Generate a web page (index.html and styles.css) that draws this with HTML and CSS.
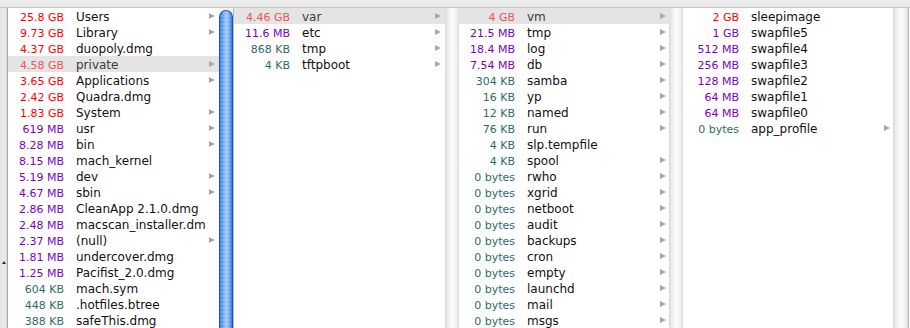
FILE: index.html
```html
<!DOCTYPE html>
<html>
<head>
<meta charset="utf-8">
<link rel="stylesheet" href="styles.css">
</head>
<body>
<div class="topband"></div>
<div class="browser">
  <div class="leftstrip"><span class="caret"></span></div>

  <div class="column">
    <div class="list w211">
      <div class="row"><span class="size gb">25.8 GB</span><span class="name">Users</span><span class="arrow"></span></div>
      <div class="row"><span class="size gb">9.73 GB</span><span class="name">Library</span><span class="arrow"></span></div>
      <div class="row"><span class="size gb">4.37 GB</span><span class="name">duopoly.dmg</span><span></span></div>
      <div class="row sel"><span class="size gb">4.58 GB</span><span class="name">private</span><span class="arrow"></span></div>
      <div class="row"><span class="size gb">3.65 GB</span><span class="name">Applications</span><span class="arrow"></span></div>
      <div class="row"><span class="size gb">2.42 GB</span><span class="name">Quadra.dmg</span><span></span></div>
      <div class="row"><span class="size gb">1.83 GB</span><span class="name">System</span><span class="arrow"></span></div>
      <div class="row"><span class="size mb">619 MB</span><span class="name">usr</span><span class="arrow"></span></div>
      <div class="row"><span class="size mb">8.28 MB</span><span class="name">bin</span><span class="arrow"></span></div>
      <div class="row"><span class="size mb">8.15 MB</span><span class="name">mach_kernel</span><span></span></div>
      <div class="row"><span class="size mb">5.19 MB</span><span class="name">dev</span><span class="arrow"></span></div>
      <div class="row"><span class="size mb">4.67 MB</span><span class="name">sbin</span><span class="arrow"></span></div>
      <div class="row"><span class="size mb">2.86 MB</span><span class="name">CleanApp 2.1.0.dmg</span><span></span></div>
      <div class="row"><span class="size mb">2.48 MB</span><span class="name">macscan_installer.dm</span><span></span></div>
      <div class="row"><span class="size mb">2.37 MB</span><span class="name">(null)</span><span class="arrow"></span></div>
      <div class="row"><span class="size mb">1.81 MB</span><span class="name">undercover.dmg</span><span></span></div>
      <div class="row"><span class="size mb">1.25 MB</span><span class="name">Pacifist_2.0.dmg</span><span></span></div>
      <div class="row"><span class="size kb">604 KB</span><span class="name">mach.sym</span><span></span></div>
      <div class="row"><span class="size kb">448 KB</span><span class="name">.hotfiles.btree</span><span></span></div>
      <div class="row"><span class="size kb">388 KB</span><span class="name">safeThis.dmg</span><span></span></div>
    </div>
    <div class="scroller s15 active"><div class="thumb"></div></div>
  </div>

  <div class="column">
    <div class="list w211">
      <div class="row sel"><span class="size gb">4.46 GB</span><span class="name">var</span><span class="arrow"></span></div>
      <div class="row"><span class="size mb">11.6 MB</span><span class="name">etc</span><span class="arrow"></span></div>
      <div class="row"><span class="size kb">868 KB</span><span class="name">tmp</span><span class="arrow"></span></div>
      <div class="row"><span class="size kb">4 KB</span><span class="name">tftpboot</span><span class="arrow"></span></div>
    </div>
    <div class="scroller s14"></div>
  </div>

  <div class="column">
    <div class="list w210">
      <div class="row sel"><span class="size gb">4 GB</span><span class="name">vm</span><span class="arrow"></span></div>
      <div class="row"><span class="size mb">21.5 MB</span><span class="name">tmp</span><span class="arrow"></span></div>
      <div class="row"><span class="size mb">18.4 MB</span><span class="name">log</span><span class="arrow"></span></div>
      <div class="row"><span class="size mb">7.54 MB</span><span class="name">db</span><span class="arrow"></span></div>
      <div class="row"><span class="size kb">304 KB</span><span class="name">samba</span><span class="arrow"></span></div>
      <div class="row"><span class="size kb">16 KB</span><span class="name">yp</span><span class="arrow"></span></div>
      <div class="row"><span class="size kb">12 KB</span><span class="name">named</span><span class="arrow"></span></div>
      <div class="row"><span class="size kb">76 KB</span><span class="name">run</span><span class="arrow"></span></div>
      <div class="row"><span class="size kb">4 KB</span><span class="name">slp.tempfile</span><span></span></div>
      <div class="row"><span class="size kb">4 KB</span><span class="name">spool</span><span class="arrow"></span></div>
      <div class="row"><span class="size kb">0 bytes</span><span class="name">rwho</span><span class="arrow"></span></div>
      <div class="row"><span class="size kb">0 bytes</span><span class="name">xgrid</span><span class="arrow"></span></div>
      <div class="row"><span class="size kb">0 bytes</span><span class="name">netboot</span><span class="arrow"></span></div>
      <div class="row"><span class="size kb">0 bytes</span><span class="name">audit</span><span class="arrow"></span></div>
      <div class="row"><span class="size kb">0 bytes</span><span class="name">backups</span><span class="arrow"></span></div>
      <div class="row"><span class="size kb">0 bytes</span><span class="name">cron</span><span class="arrow"></span></div>
      <div class="row"><span class="size kb">0 bytes</span><span class="name">empty</span><span class="arrow"></span></div>
      <div class="row"><span class="size kb">0 bytes</span><span class="name">launchd</span><span class="arrow"></span></div>
      <div class="row"><span class="size kb">0 bytes</span><span class="name">mail</span><span class="arrow"></span></div>
      <div class="row"><span class="size kb">0 bytes</span><span class="name">msgs</span><span class="arrow"></span></div>
    </div>
    <div class="scroller s14"></div>
  </div>

  <div class="column">
    <div class="list w210">
      <div class="row"><span class="size gb">2 GB</span><span class="name">sleepimage</span><span></span></div>
      <div class="row"><span class="size mb">1 GB</span><span class="name">swapfile5</span><span></span></div>
      <div class="row"><span class="size mb">512 MB</span><span class="name">swapfile4</span><span></span></div>
      <div class="row"><span class="size mb">256 MB</span><span class="name">swapfile3</span><span></span></div>
      <div class="row"><span class="size mb">128 MB</span><span class="name">swapfile2</span><span></span></div>
      <div class="row"><span class="size mb">64 MB</span><span class="name">swapfile1</span><span></span></div>
      <div class="row"><span class="size mb">64 MB</span><span class="name">swapfile0</span><span></span></div>
      <div class="row"><span class="size kb">0 bytes</span><span class="name">app_profile</span><span class="arrow"></span></div>
    </div>
    <div class="scroller s15 last"></div>
  </div>
</div>
</body>
</html>
```

FILE: styles.css
```css
* { box-sizing: border-box; }
html, body {
  margin: 0;
  padding: 0;
  width: 910px;
  height: 328px;
  overflow: hidden;
  background: #ffffff;
  font-family: "DejaVu Sans", "Liberation Sans", sans-serif;
  font-size: 11px;
}
.topband {
  height: 8px;
  background: linear-gradient(#efefef, #e6e6e6);
  border-bottom: 1px solid #c8c8c8;
}
.browser {
  display: flex;
  height: 320px;
}
.leftstrip {
  width: 8px;
  flex: none;
  background: linear-gradient(to right, #e2e2e2, #ececec 60%, #d8d8d8);
  border-right: 1px solid #a9a9a9;
  display: flex;
  flex-direction: column;
  align-items: center;
}
.caret {
  margin-top: 253px;
  width: 0;
  height: 0;
  border-left: 2.5px solid transparent;
  border-right: 2.5px solid transparent;
  border-bottom: 3px solid #2a2a2a;
}
.column {
  display: flex;
  flex: none;
}
.list { flex: none; }
.w211 { width: 211px; }
.w210 { width: 210px; }
.row {
  display: flex;
  align-items: baseline;
  height: 16px;
  line-height: 16px;
  padding-top: 1px;
  white-space: nowrap;
}
.size {
  flex: none;
  width: 56px;
  text-align: right;
}
.name {
  flex: none;
  width: 145px;
  padding-left: 12px;
  font-size: 12px;
  color: #111;
  overflow: hidden;
}
.gb { color: #ff0000; }
.mb { color: #7e00c2; }
.kb { color: #2e6c68; }
.sel { background: #e4e4e4; }
.sel .gb { color: #f15555; }
.sel .name { color: #3a3a3a; }
.arrow {
  flex: none;
  align-self: center;
  margin-top: -1px;
  width: 0;
  height: 0;
  border-left: 6px solid #a6a6a6;
  border-top: 3.5px solid transparent;
  border-bottom: 3.5px solid transparent;
}
.scroller {
  flex: none;
  height: 320px;
  background: linear-gradient(to right, #d9d9d9, #f1f1f1 25%, #fbfbfb 55%, #efefef 85%, #dadada);
}
.s14 { width: 14px; }
.s15 { width: 15px; }
.last {
  border-right: 1px solid #b4b4b4;
  width: 16px;
}
.active {
  padding-top: 2px;
  background: #f4f4f4;
  border-right: 1px solid #b8b8b8;
}
.thumb {
  height: 318px;
  border-radius: 7px 7px 0 0;
  border: 1px solid #1e4fc4;
  border-bottom: none;
  background:
    repeating-linear-gradient(to bottom, rgba(255,255,255,0.12) 0 2px, rgba(255,255,255,0) 2px 4px),
    linear-gradient(to right, #3d7ee3, #5d9bef 20%, #9ccbfa 50%, #8cc0f6 65%, #4f8ce8 90%, #2d67d6);
}
```
